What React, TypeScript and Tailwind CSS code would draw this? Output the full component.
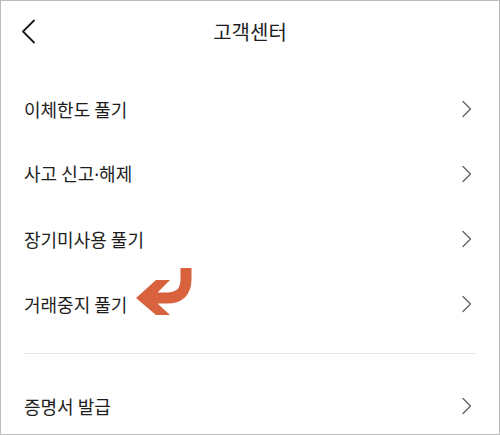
import React from "react";

const rows1: React.ReactNode[] = [
  "이체한도 풀기",
  <>
    사고 신고<span style={{ fontFamily: '"Noto Sans", sans-serif' }}>·</span>해제
  </>,
  "장기미사용 풀기",
  "거래중지 풀기",
];

function Chevron() {
  return (
    <svg width="12" height="18" viewBox="0 0 12 18" className="shrink-0">
      <path d="M2 1.5 L9.5 9 L2 16.5" fill="none" stroke="#666" strokeWidth="1.4" strokeLinecap="round" strokeLinejoin="round" />
    </svg>
  );
}

function Row({ label, arrow }: { label: React.ReactNode; arrow?: boolean }) {
  return (
    <div className="h-[65px] flex items-center justify-between pl-[23px] pr-[26px]">
      <div className="flex items-center">
        <span className="text-[18px] text-[#1e1e1e] leading-none">{label}</span>
        {arrow && (
          <svg width="60" height="52" viewBox="0 0 60 52" className="ml-[9px] -mt-[20px]">
            <path d="M50 0 L50 11 Q50 30 31 30 L22 30" fill="none" stroke="#d9623e" strokeWidth="11" />
            <polygon points="0,30 20,12 34,12 22,24 22,36 34,47 20,47" fill="#d9623e" />
          </svg>
        )}
      </div>
      <Chevron />
    </div>
  );
}

export default function App() {
  return (
    <div
      className="w-[500px] h-[435px] bg-white border border-[#bcbcbc] overflow-hidden flex flex-col"
      style={{ fontFamily: '"Noto Sans CJK KR", "Noto Sans", sans-serif' }}
    >
      <div className="h-[61px] shrink-0 relative flex items-center justify-center">
        <svg width="16" height="26" viewBox="0 0 16 26" className="absolute left-[20px] top-[18px]">
          <path d="M13 1.5 L2 12.5 L13 23.5" fill="none" stroke="#1a1a1a" strokeWidth="1.8" strokeLinecap="round" strokeLinejoin="round" />
        </svg>
        <span className="text-[20px] text-[#1e1e1e] leading-none">고객센터</span>
      </div>
      <div className="mt-[14px] flex flex-col">
        {rows1.map((r, i) => (
          <Row key={i} label={r} arrow={i === 3} />
        ))}
      </div>
      <div className="mt-[17px] mx-[23px] h-px bg-[#e6e6e6] shrink-0" />
      <div className="mt-[19px]">
        <Row label="증명서 발급" />
      </div>
    </div>
  );
}
